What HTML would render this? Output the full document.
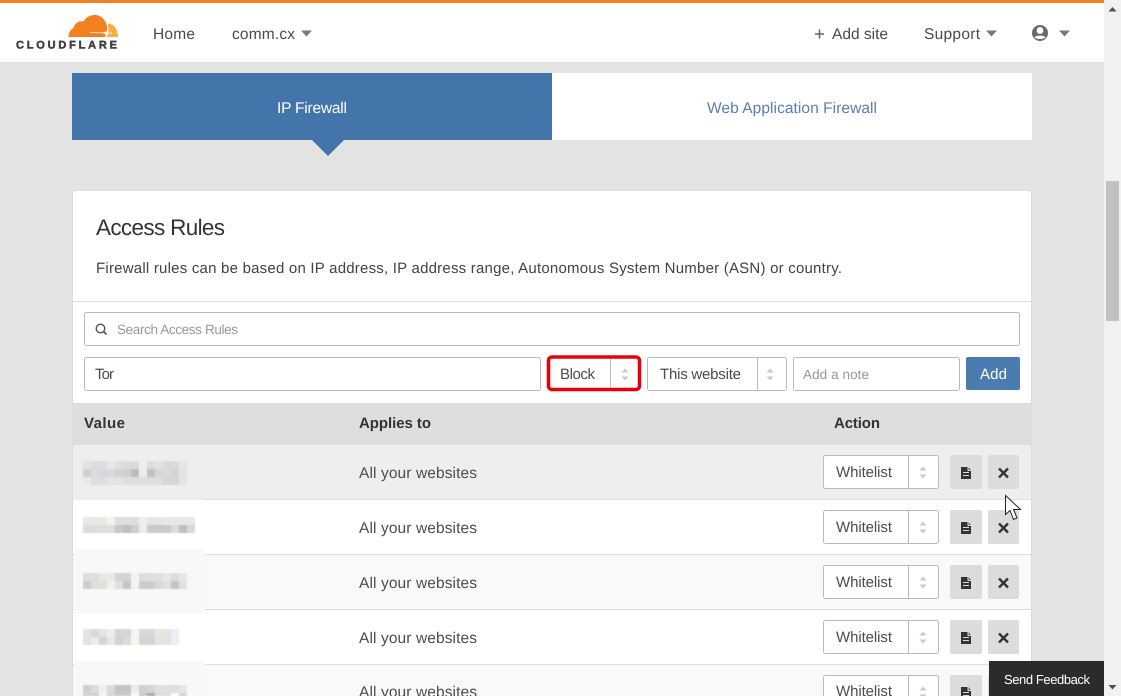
<!DOCTYPE html>
<html lang="en"><head><meta charset="utf-8"><title>Cloudflare Firewall Access Rules</title>
<style>
html,body{margin:0;padding:0;width:1121px;height:696px;overflow:hidden;background:#e4e4e4}
svg{display:block}
text{font-family:"Liberation Sans",sans-serif;font-size:15.5px;fill:#4a4a4a;text-rendering:geometricPrecision}
.h{font-weight:bold;fill:#333;font-size:15px}
.ph{fill:#999;font-size:13.5px}
.w{fill:#4d4d4d;font-size:15.500px}
.sel{fill:#4d4d4d;font-size:15px}
.arrow{fill:#cacaca}
</style></head><body>
<svg xmlns="http://www.w3.org/2000/svg" width="1121" height="696" viewBox="0 0 1121 696">
<defs>
<filter id="soft" x="-5%" y="-5%" width="110%" height="110%"><feGaussianBlur stdDeviation="0.45"/></filter>
<g id="arr"><path class="arrow" d="M-3.500 -1.500L0 -5.500L3.500 -1.500Z M-3.500 2.500L3.500 2.500L0 6.500Z"/></g>
<g id="act">
 <rect x="823.500" y="455.500" width="115" height="33" rx="2" fill="#fff" stroke="#bbb"/>
 <path d="M908.500 456v32" stroke="#bbb"/>
 <use href="#arr" x="923" y="472"/>
 <rect x="950" y="455" width="32" height="34" rx="2" fill="#dcdcdc"/>
 <path d="M961 467h6.500v4h3.500v8h-10z" fill="#333"/>
 <path d="M968.500 467l2.500 3h-2.500z" fill="#666"/>
 <path d="M963 472.500h6M963 475.500h6" stroke="#dcdcdc" stroke-width="1"/>
 <rect x="988" y="455" width="31" height="34" rx="2" fill="#dcdcdc"/>
 <path d="M999 468.500l9 9M1008 468.500l-9 9" stroke="#333" stroke-width="2.400" fill="none"/>
</g>
</defs>

<!-- page -->
<rect width="1121" height="696" fill="#e4e4e4"/>

<!-- top bar -->
<rect x="0" y="0" width="1104" height="62" fill="#fff"/>
<rect x="0" y="0" width="1104" height="3" fill="#f38020"/>

<!-- logo -->
<path d="M68.500 37C68.500 33 70.500 29.500 73.500 28C74.500 23.500 78.500 20.500 83.500 21.500C86 17.500 90 15 94.500 15C101 15 106 20 107 26.500C107.500 29 106.500 32 105 37Z" fill="#f38020"/>
<path d="M107.500 23.500C114 23.500 118 29.500 118 37H106.500C108 33 109 29 107.500 23.500Z" fill="#fbad41"/>
<path d="M90 32.600L112 33" stroke="#fff" stroke-width="0.800"/>
<path d="M102 33L109 30.500L107.500 33L109 35.500Z" fill="#fff"/>
<text x="16" y="48.500" textLength="101" style="font-size:11px;font-weight:bold;fill:#404041;stroke:#404041;stroke-width:.5px">CLOUDFLARE</text>

<!-- nav -->
<text x="153" y="39" textLength="42">Home</text>
<text x="232" y="39" textLength="63">comm.cx</text>
<path d="M301 30.500H312L306.500 36.500Z" fill="#7a7a7a"/>
<path d="M819.500 29.500v9M815 34h9" stroke="#666" stroke-width="1.500"/>
<text x="832" y="39" textLength="56">Add site</text>
<text x="924" y="39" textLength="56">Support</text>
<path d="M986 30.500H997L991.500 36.500Z" fill="#7a7a7a"/>
<circle cx="1040" cy="33" r="8" fill="#6b6b6b"/>
<circle cx="1040" cy="30.500" r="3.400" fill="#fff"/>
<path d="M1034.500 37.500C1036 35 1044 35 1045.500 37.500C1043 39.500 1037 39.500 1034.500 37.500Z" fill="#fff"/>
<path d="M1059 30.500H1070L1064.500 36.500Z" fill="#7a7a7a"/>

<!-- tabs -->
<rect x="72" y="73" width="480" height="67" fill="#4375ab"/>
<rect x="552" y="73" width="480" height="67" fill="#fff"/>
<path d="M312 140H344L328 156Z" fill="#4375ab"/>
<text x="277" y="113" textLength="70" style="fill:#fff">IP Firewall</text>
<text x="707" y="113" textLength="170" style="fill:#5a7eae">Web Application Firewall</text>

<!-- card -->
<rect x="72.500" y="190.500" width="959" height="520" rx="3" fill="#fff" stroke="#dcdcdc"/>
<text x="96" y="235" textLength="129" style="font-size:22.500px;fill:#333">Access Rules</text>
<text x="96" y="273" textLength="746" style="font-size:15px;fill:#444">Firewall rules can be based on IP address, IP address range, Autonomous System Number (ASN) or country.</text>
<path d="M73 301.500H1031" stroke="#dedede"/>

<!-- search -->
<rect x="84.500" y="312.500" width="935" height="33" rx="2" fill="#fff" stroke="#bbb"/>
<circle cx="100.500" cy="328.500" r="4.300" fill="none" stroke="#555" stroke-width="1.400"/>
<path d="M103.500 331.500L106.500 334.500" stroke="#555" stroke-width="1.600"/>
<text class="ph" x="117" y="334" textLength="121">Search Access Rules</text>

<!-- add form -->
<rect x="84.500" y="357.500" width="456" height="33" rx="2" fill="#fff" stroke="#bbb"/>
<text class="sel" x="95" y="379" textLength="19">Tor</text>

<rect x="548.500" y="357" width="91" height="32.500" rx="3.500" fill="#fff" stroke="#e8000b" stroke-width="3.500"/>
<text class="sel" x="560" y="379" textLength="35">Block</text>
<path d="M610.500 359v29" stroke="#bbb"/>
<use href="#arr" x="625" y="374"/>

<rect x="647.500" y="357.500" width="139" height="33" rx="2" fill="#fff" stroke="#bbb"/>
<text class="sel" x="660" y="379" textLength="81">This website</text>
<path d="M757.500 358v32" stroke="#bbb"/>
<use href="#arr" x="770" y="374"/>

<rect x="793.500" y="357.500" width="166" height="33" rx="2" fill="#fff" stroke="#bbb"/>
<text class="ph" x="803" y="379" textLength="66">Add a note</text>

<rect x="966" y="357" width="54" height="33" rx="2" fill="#4a7cb0"/>
<text x="980" y="379" textLength="27" style="fill:#fff;font-size:15px">Add</text>

<!-- table header -->
<rect x="72" y="403" width="960" height="42" fill="#dedede"/>
<text class="h" x="84" y="428" textLength="41">Value</text>
<text class="h" x="359" y="428" textLength="72">Applies to</text>
<text class="h" x="834" y="428" textLength="46">Action</text>

<!-- rows -->
<rect x="73" y="445" width="958" height="54" fill="#eee"/>
<rect x="73" y="500" width="958" height="54" fill="#fff"/>
<rect x="73" y="555" width="958" height="54" fill="#f9f9f9"/>
<rect x="73" y="610" width="958" height="54" fill="#fff"/>
<rect x="73" y="665" width="958" height="31" fill="#f9f9f9"/>
<path d="M73 499.500H1031M73 554.500H1031M73 609.500H1031M73 664.500H1031" stroke="#dedede"/>

<!-- redaction patches -->
<rect x="73" y="445" width="132" height="55" fill="#eee"/>
<rect x="73" y="500" width="132" height="49" fill="#fff"/>
<rect x="75" y="549" width="130" height="64" rx="2" fill="#f8f8f8"/>
<rect x="73" y="613" width="132" height="48" fill="#fff"/>
<rect x="75" y="661" width="130" height="35" rx="2" fill="#f8f8f8"/>

<!-- blurred values -->
<g filter="url(#soft)">
<g transform="translate(83 461)">
<rect x="0" width="8" height="8" fill="#e2e2e2"/><rect x="8" width="16" height="8" fill="#dcdcdc"/><rect x="24" width="8" height="8" fill="#e8e8e8"/><rect x="32" width="8" height="8" fill="#e0e0e0"/><rect x="40" width="16" height="8" fill="#dbdbdb"/><rect x="56" width="8" height="8" fill="#eee"/><rect x="64" width="8" height="8" fill="#dcdcdc"/><rect x="72" width="8" height="8" fill="#e2e2e2"/><rect x="80" width="16" height="8" fill="#dadada"/><rect x="96" width="8" height="8" fill="#e6e6e6"/>
<rect x="0" y="8" width="8" height="8" fill="#cfcfcf"/><rect x="8" y="8" width="8" height="8" fill="#e0dcd2"/><rect x="16" y="8" width="8" height="8" fill="#d5d7dc"/><rect x="24" y="8" width="8" height="8" fill="#d8d8de"/><rect x="32" y="8" width="8" height="8" fill="#d2d0d0"/><rect x="40" y="8" width="8" height="8" fill="#d0d0d0"/><rect x="48" y="8" width="8" height="8" fill="#bdbdbd"/><rect x="56" y="8" width="8" height="8" fill="#ececec"/><rect x="64" y="8" width="8" height="8" fill="#c2c2c2"/><rect x="72" y="8" width="8" height="8" fill="#d6d6d6"/><rect x="80" y="8" width="8" height="8" fill="#dcdad6"/><rect x="88" y="8" width="8" height="8" fill="#d4d4d4"/><rect x="96" y="8" width="8" height="8" fill="#e0e2e6"/>
<rect x="0" y="16" width="8" height="8" fill="#e8e8e8"/><rect x="8" y="16" width="16" height="8" fill="#dedede"/><rect x="24" y="16" width="16" height="8" fill="#e4e4e4"/><rect x="40" y="16" width="40" height="8" fill="#dedede"/><rect x="80" y="16" width="16" height="8" fill="#d6d6d6"/><rect x="96" y="16" width="8" height="8" fill="#e4e4e4"/>
</g>
<g transform="translate(83 517)">
<rect x="0" width="24" height="8" fill="#e8e8e8"/><rect x="16" width="8" height="8" fill="#e8e8e0"/><rect x="24" width="8" height="8" fill="#f2f2f2"/><rect x="32" width="24" height="8" fill="#dedede"/><rect x="56" width="8" height="8" fill="#eee"/><rect x="64" width="16" height="8" fill="#e4e4e4"/><rect x="80" width="32" height="8" fill="#e8e8e8"/>
<rect x="0" y="8" width="16" height="8" fill="#dcdcdc"/><rect x="16" y="8" width="8" height="8" fill="#dfded8"/><rect x="24" y="8" width="8" height="8" fill="#dcdcdc"/><rect x="32" y="8" width="8" height="8" fill="#c8c8c8"/><rect x="40" y="8" width="8" height="8" fill="#bfbfbf"/><rect x="48" y="8" width="8" height="8" fill="#cdcdcd"/><rect x="56" y="8" width="8" height="8" fill="#ececec"/><rect x="64" y="8" width="24" height="8" fill="#c9c9c9"/><rect x="88" y="8" width="8" height="8" fill="#dadada"/><rect x="96" y="8" width="8" height="8" fill="#bfbfbf"/><rect x="104" y="8" width="8" height="8" fill="#d8d8d8"/>
</g>
<g transform="translate(83 573)">
<rect x="0" width="16" height="8" fill="#dedede"/><rect x="16" width="16" height="8" fill="#e8e8e4"/><rect x="32" width="16" height="8" fill="#d4d4d4"/><rect x="48" width="8" height="8" fill="#f4f4ec"/><rect x="56" width="8" height="8" fill="#dcdce2"/><rect x="64" width="16" height="8" fill="#e0e0e0"/><rect x="80" width="8" height="8" fill="#e8e8e0"/><rect x="88" width="8" height="8" fill="#dcdcdc"/><rect x="96" width="8" height="8" fill="#e8e8e8"/>
<rect x="0" y="8" width="8" height="8" fill="#cdcdcd"/><rect x="8" y="8" width="8" height="8" fill="#dedede"/><rect x="16" y="8" width="8" height="8" fill="#e2e0da"/><rect x="24" y="8" width="8" height="8" fill="#f0f0f0"/><rect x="32" y="8" width="8" height="8" fill="#dedede"/><rect x="40" y="8" width="8" height="8" fill="#c6c6c6"/><rect x="48" y="8" width="8" height="8" fill="#f4f4ec"/><rect x="56" y="8" width="16" height="8" fill="#cbcbd0"/><rect x="72" y="8" width="8" height="8" fill="#d8d8d8"/><rect x="80" y="8" width="8" height="8" fill="#e0e0da"/><rect x="88" y="8" width="8" height="8" fill="#c4c4c8"/><rect x="96" y="8" width="8" height="8" fill="#e2e2e2"/>
</g>
<g transform="translate(83 629)">
<rect x="0" width="8" height="8" fill="#e4e4e4"/><rect x="8" width="8" height="8" fill="#d8d8d8"/><rect x="16" width="8" height="8" fill="#e4e4e4"/><rect x="24" width="8" height="8" fill="#ededed"/><rect x="32" width="16" height="8" fill="#d6d6d6"/><rect x="48" width="8" height="8" fill="#f6f6ee"/><rect x="56" width="16" height="8" fill="#d8d8dc"/><rect x="72" width="8" height="8" fill="#e6e6e6"/><rect x="80" width="8" height="8" fill="#e4e4de"/><rect x="88" width="8" height="8" fill="#eeeef4"/>
<rect x="0" y="8" width="8" height="8" fill="#e2e2e2"/><rect x="8" y="8" width="8" height="8" fill="#ecebe4"/><rect x="16" y="8" width="8" height="8" fill="#d4d4da"/><rect x="24" y="8" width="8" height="8" fill="#e6e6ec"/><rect x="32" y="8" width="8" height="8" fill="#d2d2d2"/><rect x="40" y="8" width="8" height="8" fill="#dcdcdc"/><rect x="48" y="8" width="8" height="8" fill="#f6f6ee"/><rect x="56" y="8" width="16" height="8" fill="#d4d4d8"/><rect x="72" y="8" width="16" height="8" fill="#e2e2e0"/><rect x="88" y="8" width="8" height="8" fill="#eeeef4"/>
</g>
<g transform="translate(83 685)">
<rect x="0" width="8" height="8" fill="#cfcfcf"/><rect x="8" width="8" height="8" fill="#dcdcdc"/><rect x="16" width="8" height="8" fill="#eef0f2"/><rect x="24" width="8" height="8" fill="#dadada"/><rect x="32" width="16" height="8" fill="#c4c4c4"/><rect x="48" width="8" height="8" fill="#ebebeb"/><rect x="56" width="8" height="8" fill="#cfcfcf"/><rect x="64" width="8" height="8" fill="#d4d4d4"/><rect x="72" width="16" height="8" fill="#e0e0e0"/><rect x="88" width="8" height="8" fill="#e0dede"/><rect x="96" width="8" height="8" fill="#e4e6e6"/>
<rect x="0" y="8" width="8" height="3" fill="#d8d0c8"/><rect x="8" y="8" width="8" height="3" fill="#c8d0d8"/><rect x="16" y="8" width="8" height="3" fill="#f4f4f4"/><rect x="24" y="8" width="8" height="3" fill="#d4d4d4"/><rect x="32" y="8" width="16" height="3" fill="#cacaca"/><rect x="56" y="8" width="8" height="3" fill="#c8c8c8"/><rect x="64" y="8" width="8" height="3" fill="#a8a8b0"/><rect x="72" y="8" width="16" height="3" fill="#dcdcdc"/><rect x="88" y="8" width="8" height="3" fill="#fafafa"/><rect x="96" y="8" width="8" height="3" fill="#d4d4d4"/>
</g>
</g>

<!-- applies to -->
<text class="w" x="359" y="478" textLength="118">All your websites</text>
<text class="w" x="359" y="533" textLength="118">All your websites</text>
<text class="w" x="359" y="588" textLength="118">All your websites</text>
<text class="w" x="359" y="643" textLength="118">All your websites</text>
<text class="w" x="359" y="697" textLength="118">All your websites</text>

<!-- actions -->
<use href="#act"/>
<use href="#act" y="55"/>
<use href="#act" y="110"/>
<use href="#act" y="165"/>
<use href="#act" y="220"/>
<text class="sel" x="836" y="477" textLength="56">Whitelist</text>
<text class="sel" x="836" y="532" textLength="56">Whitelist</text>
<text class="sel" x="836" y="587" textLength="56">Whitelist</text>
<text class="sel" x="836" y="642" textLength="56">Whitelist</text>
<text class="sel" x="836" y="696" textLength="56">Whitelist</text>

<!-- right gutter beside card -->
<rect x="1032" y="445" width="72" height="216" fill="#e4e4e4"/>

<!-- feedback -->
<rect x="989" y="661" width="115" height="35" fill="#2b2b2b"/>
<text x="1004" y="684" textLength="86" style="fill:#fff;font-size:13px">Send Feedback</text>

<!-- scrollbar -->
<rect x="1104" y="0" width="17" height="696" fill="#f1f1f1"/>
<rect x="1106" y="181" width="13" height="140" fill="#c1c1c1"/>
<path d="M1108.500 11.500L1112.500 7L1116.500 11.500Z" fill="#505050"/>
<path d="M1108.500 685L1112.500 689.500L1116.500 685Z" fill="#505050"/>

<!-- cursor -->
<path d="M1005.500 495.500V514.500L1010 510.500L1013.500 519.500L1017 518L1013.500 509.500H1020.500Z" fill="#fff" stroke="#222" stroke-width="1"/>
</svg>
</body></html>
